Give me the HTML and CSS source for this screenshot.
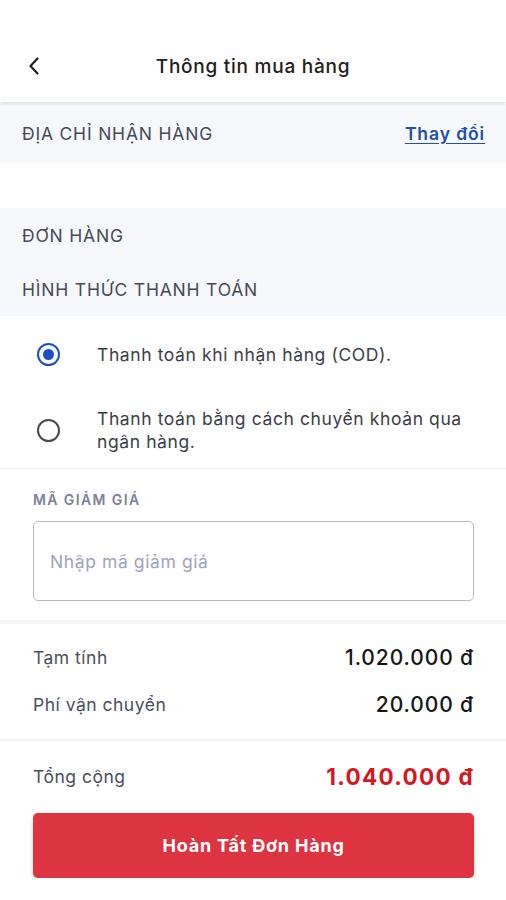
FILE: index.html
```html
<!DOCTYPE html>
<html lang="vi">
  <head>
    <meta charset="UTF-8">
    <meta name="viewport" content="width=device-width, initial-scale=1.0">
    <title>Thông tin mua hàng</title>
    <link rel="stylesheet" href="styles.css">
  </head>
  <body>
    <header class="topbar">
      <button class="back-button" aria-label="Quay lại">
        <svg width="14" height="22" viewBox="0 0 14 22"><path d="M10.5 3.5 L3.5 11 L10.5 18.5" fill="none" stroke="#1c1f2a" stroke-width="2.2" stroke-linecap="round" stroke-linejoin="round"/></svg>
      </button>
      <h1 class="title">Thông tin mua hàng</h1>
    </header>

    <section class="band address">
      <span>ĐỊA CHỈ NHẬN HÀNG</span>
      <a href="#" class="change-link">Thay đổi</a>
    </section>

    <section class="band order">
      <div class="band-row">ĐƠN HÀNG</div>
      <div class="band-row">HÌNH THỨC THANH TOÁN</div>
    </section>

    <div class="payment-list">
      <label class="option">
        <span class="radio checked"></span>
        <span class="option-text">Thanh toán khi nhận hàng (COD).</span>
      </label>
      <label class="option">
        <span class="radio"></span>
        <span class="option-text">Thanh toán bằng cách chuyển khoản qua ngân hàng.</span>
      </label>
    </div>

    <section class="coupon">
      <div class="coupon-label">MÃ GIẢM GIÁ</div>
      <div class="coupon-input">Nhập mã giảm giá</div>
    </section>

    <section class="summary">
      <div class="summary-row">
        <span class="summary-key">Tạm tính</span>
        <span class="summary-value">1.020.000 đ</span>
      </div>
      <div class="summary-row">
        <span class="summary-key">Phí vận chuyển</span>
        <span class="summary-value">20.000 đ</span>
      </div>
    </section>

    <section class="total">
      <div class="summary-row">
        <span class="summary-key">Tổng cộng</span>
        <span class="total-value">1.040.000 đ</span>
      </div>
      <button class="submit-button">Hoàn Tất Đơn Hàng</button>
    </section>
  </body>
</html>
```

FILE: styles.css
```css
:root {
  font-family: Inter, "Noto Sans", sans-serif;
  color: #1c1f2a;
}

body {
  margin: 0;
  background-color: #fff;
}

.topbar {
  height: 72px;
  padding-top: 30px;
  display: flex;
  align-items: center;
  justify-content: center;
  position: relative;
  background-color: #fff;
  box-shadow: 0 2px 3px rgba(0, 0, 0, .12);
  z-index: 1;
}
.back-button {
  position: absolute;
  left: 27px;
  top: 55px;
  appearance: none;
  border: 0;
  background: none;
  padding: 0;
  display: flex;
}
.title {
  margin: 0;
  font-size: 19px;
  font-weight: 500;
  letter-spacing: .75px;
  color: #202020;
}

.band {
  background-color: #f6f8fb;
  color: #454a58;
  font-size: 17.5px;
  letter-spacing: .8px;
  padding: 0 21px 0 22px;
}
.address {
  margin-top: 2px;
  height: 59px;
  display: flex;
  align-items: center;
  justify-content: space-between;
}
.change-link {
  color: #1f4fa8;
  font-weight: 600;
  font-size: 17.5px;
  letter-spacing: .9px;
  text-underline-offset: 3px;
}
.order {
  margin-top: 45px;
}
.band-row {
  height: 54px;
  display: flex;
  align-items: center;
}

.payment-list {
  border-bottom: 1px solid #eceef2;
}
.option {
  height: 76px;
  display: flex;
  align-items: center;
  gap: 37px;
  padding-left: 37px;
  padding-right: 30px;
}
.radio {
  flex: none;
  width: 19px;
  height: 19px;
  border: 2.5px solid #4a4a4a;
  border-radius: 50%;
  display: grid;
  place-items: center;
}
.radio.checked {
  border-color: #1e4fc0;
}
.radio.checked::after {
  content: '';
  width: 11px;
  height: 11px;
  border-radius: 50%;
  background-color: #1e4fc0;
}
.option-text {
  font-size: 17.5px;
  line-height: 23px;
  letter-spacing: .6px;
  color: #3a3d46;
}

.coupon {
  padding: 20px 32px 19px 33px;
}
.coupon-label {
  font-size: 14px;
  font-weight: 600;
  letter-spacing: 1.4px;
  color: #7b8199;
  height: 22px;
  line-height: 22px;
  margin-bottom: 10px;
}
.coupon-input {
  height: 78px;
  border: 1px solid #b9bbc3;
  border-radius: 5px;
  display: flex;
  align-items: center;
  padding-left: 16px;
  font-size: 17.5px;
  letter-spacing: .6px;
  color: #9ea3b8;
}

.summary {
  border-top: 4px solid #f4f5f7;
  border-bottom: 2px solid #f2f3f5;
  padding: 10px 32px 11px 33px;
}
.summary-row {
  height: 47px;
  display: flex;
  align-items: center;
  justify-content: space-between;
}
.summary-key {
  font-size: 17.5px;
  letter-spacing: .5px;
  color: #4a4f5c;
}
.summary-value {
  font-size: 21px;
  font-weight: 500;
  letter-spacing: .9px;
  color: #161616;
}

.total {
  padding: 12px 32px 0 33px;
  .summary-row {
    height: 46px;
  }
}
.total-value {
  font-size: 22.5px;
  font-weight: 700;
  color: #d41822;
  letter-spacing: 1.3px;
}
.submit-button {
  appearance: none;
  margin-top: 14px;
  width: 100%;
  height: 65px;
  border: 0;
  border-radius: 5px;
  background-color: #dc3441;
  color: #fff;
  font-family: inherit;
  font-size: 18px;
  font-weight: 700;
  letter-spacing: .8px;
  box-shadow: 0 2px 4px rgba(0, 0, 0, .2);
}
```
